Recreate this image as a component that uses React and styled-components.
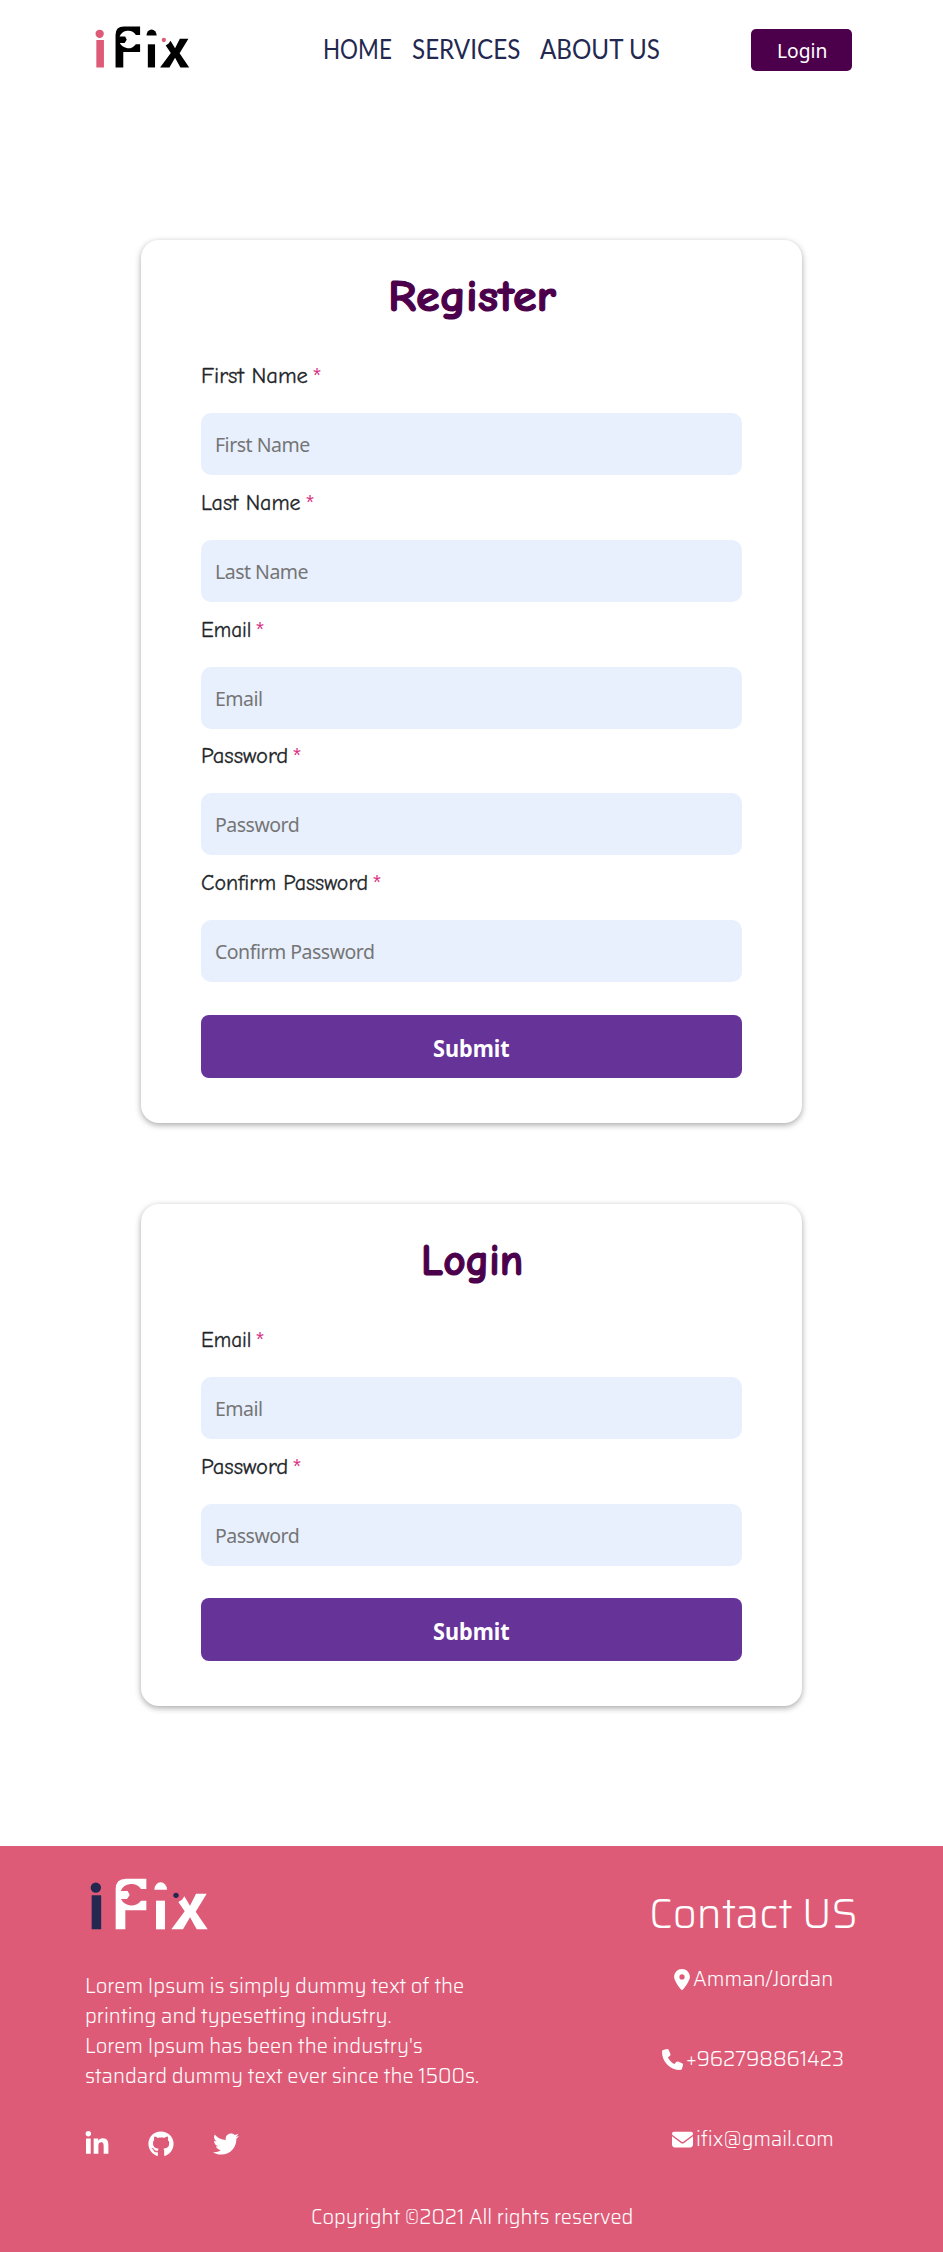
import React, { useLayoutEffect, useRef, useState } from "react";
import styled, { createGlobalStyle } from "styled-components";
import { FaLinkedinIn, FaGithub, FaTwitter } from "react-icons/fa";
import { FaLocationDot, FaPhone, FaEnvelope } from "react-icons/fa6";

const GlobalStyle = createGlobalStyle`
  *, *::before, *::after { box-sizing: border-box; }
  body { margin: 0; background: #fff; font-family: "Segoe UI", "Noto Sans", sans-serif; color: #212529; }
`;

const FitBox = styled.span`
  display: inline-block;
  flex: none;
  width: ${(p) => p.$width}px;
  text-align: left;
  white-space: nowrap;
`;
const FitText = styled.span`
  display: inline-block;
  transform-origin: left center;
`;

/* Sets a run of text to an exact measure, whichever fallback font is in use. */
function Fit({ width, children }) {
  const ref = useRef(null);
  const [scale, setScale] = useState(1);
  useLayoutEffect(() => {
    setScale(width / ref.current.offsetWidth);
  }, [width, children]);
  return (
    <FitBox $width={width}>
      <FitText ref={ref} style={{ transform: `scaleX(${scale})` }}>{children}</FitText>
    </FitBox>
  );
}

const Header = styled.header`
  display: flex;
  align-items: flex-start;
  height: 100px;
  padding: 25.5px 91px 0 95px;
`;
const LogoSvg = styled.svg`
  display: block;
  flex: none;
  width: ${(p) => p.$w}px;
  height: ${(p) => p.$h}px;
`;
const Nav = styled.nav`
  display: flex;
  gap: 20px;
  margin: 5.5px 0 0 133px;
`;
const NavLink = styled.a`
  font: 400 26px/36px "Trebuchet MS", "Lato", sans-serif;
  color: #232850;
`;
const LoginButton = styled.button`
  width: 101px;
  height: 42px;
  margin: 3.5px 0 0 auto;
  padding: 2px 0 0;
  border: 0;
  border-radius: 5px;
  background: #4c004c;
  color: #fff;
  font: 400 20px/30px "Segoe UI", "Noto Sans", sans-serif;
`;

const Main = styled.main`
  display: flex;
  flex-direction: column;
  align-items: center;
  gap: 81px;
  height: 1746px;
  padding-top: 140px;
`;
const Card = styled.form`
  width: 661px;
  padding: 30px 60px 45px;
  border-radius: 18px;
  background: #fff;
  box-shadow: 0 2px 6px rgba(0, 0, 0, 0.35);
`;
const Title = styled.h1`
  height: 52px;
  margin: 0 0 39px;
  text-align: center;
  color: #4c004c;
  font: 700 45px/52px "Comic Sans MS", "Comic Neue", "Comic Relief", "Lato", sans-serif;
  -webkit-text-stroke: 1.2px #4c004c;
`;
const Field = styled.div`
  height: 126.75px;
`;
const Label = styled.label`
  display: flex;
  gap: 3px;
  height: 52px;
  font: 400 21.5px/30px "Comic Sans MS", "Comic Neue", "Comic Relief", "Lato", sans-serif;
  -webkit-text-stroke: 0.3px #212529;
`;
const Required = styled.span`
  color: #d63384;
  font: 400 20px/34px "Liberation Mono", monospace;
  -webkit-text-stroke: 0;
`;
const Input = styled.input`
  display: block;
  width: 100%;
  height: 62px;
  padding: 1px 14px 0;
  border: 0;
  border-radius: 10px;
  background: #e8f0fe;
  font: 400 19.5px/30px "Segoe UI", "Noto Sans", sans-serif;
  letter-spacing: -0.5px;
  &::placeholder { color: #757575; opacity: 1; }
`;
const Submit = styled.button`
  display: block;
  width: 100%;
  height: 63px;
  margin-top: 20px;
  padding: 5px 0 0;
  border: 0;
  border-radius: 8px;
  background: #663399;
  color: #fff;
  font: 700 22.5px/32px "Segoe UI", "Noto Sans", sans-serif;
`;

const Footer = styled.footer`
  height: 406px;
  background: #de5b78;
  color: #fff;
  font: 300 21px/30px "Saira", "Roboto", sans-serif;
`;
const FooterColumns = styled.div`
  display: flex;
  justify-content: space-between;
  height: 356px;
  padding: 32px 87px 0 85px;
`;
const About = styled.div`
  display: flex;
  flex-direction: column;
  align-items: flex-start;
`;
const FooterLogo = styled.div`
  padding-left: 5px;
  height: 93px;
`;
const Social = styled.div`
  display: flex;
  align-items: center;
  gap: 38.5px;
  height: 26px;
  margin: 40px 0 0 -1.5px;
  font-size: 26px;
`;
const Contact = styled.address`
  display: flex;
  flex-direction: column;
  align-items: center;
  width: 205px;
  font-style: normal;
`;
const ContactTitle = styled.h2`
  height: 50px;
  margin: 10px 0 16px;
  font: 300 42px/50px "Saira", "Roboto", sans-serif;
`;
const ContactRow = styled.div`
  display: flex;
  align-items: center;
  gap: 3px;
  height: 50px;
  margin-bottom: 30px;
  padding-right: 1px;
  svg { flex: none; height: 21px; width: ${(p) => p.$icon}px; }
`;
const Copyright = styled.p`
  margin: 0;
  text-align: center;
`;

function Logo({ width, height, accent, ink }) {
  return (
    <LogoSvg $w={width} $h={height} viewBox="90 145 356 156" preserveAspectRatio="none" role="img" aria-label="iFix">
      <g fill={accent}>
        <circle cx="107.5" cy="174" r="15.5" />
        <rect x="95" y="197" width="28.5" height="102" rx="1" />
        <circle cx="348" cy="197" r="8" />
      </g>
      <g fill={ink}>
        <path d="M167 299V178Q167 147 198 147H259V178H243A35 35 0 0 0 182 184H203L209 196L201 208H183A35 35 0 0 0 243 213H259V242H196V299Z" />
        <path d="M283 180A19 22 0 0 1 321 180Z" />
        <rect x="288" y="213" width="27" height="86" />
        <path d="M355 217L366 210L373 200L390 228L408 192H440L407 246L443 299H410L390 263L369 299H334L374 245Z" />
      </g>
    </LogoSvg>
  );
}

function FormField({ label, width }) {
  return (
    <Field>
      <Label>
        <Fit width={width}>{label}</Fit>
        <Required>*</Required>
      </Label>
      <Input placeholder={label} />
    </Field>
  );
}

export default function App() {
  return (
    <>
      <GlobalStyle />
      <Header>
        <Logo width={95} height={42} accent="#de5b78" ink="#000" />
        <Nav>
          <NavLink><Fit width={69}>HOME</Fit></NavLink>
          <NavLink><Fit width={108}>SERVICES</Fit></NavLink>
          <NavLink><Fit width={120}>ABOUT US</Fit></NavLink>
        </Nav>
        <LoginButton><Fit width={50}>Login</Fit></LoginButton>
      </Header>
      <Main>
        <Card>
          <Title><Fit width={168}>Register</Fit></Title>
          <FormField label="First Name" width={107} />
          <FormField label="Last Name" width={100} />
          <FormField label="Email" width={50} />
          <FormField label="Password" width={87} />
          <FormField label="Confirm Password" width={167} />
          <Submit type="button"><Fit width={77}>Submit</Fit></Submit>
        </Card>
        <Card>
          <Title><Fit width={102}>Login</Fit></Title>
          <FormField label="Email" width={50} />
          <FormField label="Password" width={87} />
          <Submit type="button"><Fit width={77}>Submit</Fit></Submit>
        </Card>
      </Main>
      <Footer>
        <FooterColumns>
          <About>
            <FooterLogo><Logo width={118.7} height={52} accent="#232850" ink="#fff" /></FooterLogo>
            <Fit width={379}>Lorem Ipsum is simply dummy text of the</Fit>
            <Fit width={307}>printing and typesetting industry.</Fit>
            <Fit width={338}>Lorem Ipsum has been the industry's</Fit>
            <Fit width={394}>standard dummy text ever since the 1500s.</Fit>
            <Social>
              <FaLinkedinIn />
              <FaGithub />
              <FaTwitter />
            </Social>
          </About>
          <Contact>
            <ContactTitle><Fit width={209}>Contact US</Fit></ContactTitle>
            <ContactRow $icon={16}><FaLocationDot /><Fit width={140}>Amman/Jordan</Fit></ContactRow>
            <ContactRow $icon={21}><FaPhone /><Fit width={158}>+962798861423</Fit></ContactRow>
            <ContactRow $icon={21}><FaEnvelope /><Fit width={138}>ifix@gmail.com</Fit></ContactRow>
          </Contact>
        </FooterColumns>
        <Copyright><Fit width={322}>Copyright ©2021 All rights reserved</Fit></Copyright>
      </Footer>
    </>
  );
}
